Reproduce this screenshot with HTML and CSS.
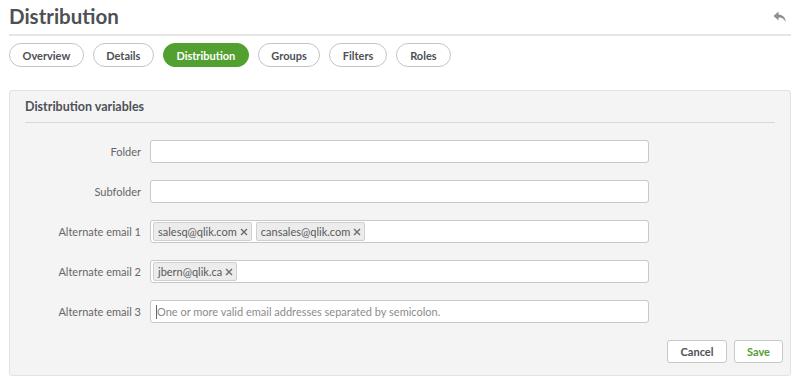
FILE: index.html
```html
<!DOCTYPE html>
<html lang="en">
<head>
    <meta charset="UTF-8">
    <meta name="viewport" content="width=device-width, initial-scale=1.0">
    <title>Distribution</title>
    <link rel="stylesheet" href="styles.css">
</head>
<body>
    <div class="page">
        <header class="page-header">
            <h1 class="title">Distribution</h1>
            <button class="undo" title="Back">
                <svg width="14" height="12" viewBox="0 0 14 12">
                    <path d="M5.5 0.5 L0.5 5 L5.5 9.5 L5.5 6.6 C8.6 6.4 10.9 7.6 12.8 11 C12.5 6.6 10.2 3.7 5.5 3.4 Z" fill="#8a9196"/>
                </svg>
            </button>
        </header>

        <nav class="tabs">
            <button class="tab">Overview</button>
            <button class="tab">Details</button>
            <button class="tab active">Distribution</button>
            <button class="tab">Groups</button>
            <button class="tab">Filters</button>
            <button class="tab">Roles</button>
        </nav>

        <section class="panel">
            <h2 class="panel-title">Distribution variables</h2>

            <div class="form">
                <div class="row">
                    <label class="label">Folder</label>
                    <div class="field"></div>
                </div>
                <div class="row">
                    <label class="label">Subfolder</label>
                    <div class="field"></div>
                </div>
                <div class="row">
                    <label class="label">Alternate email 1</label>
                    <div class="field">
                        <span class="tag">salesq@qlik.com
                            <svg class="x" width="8" height="8" viewBox="0 0 8 8"><path d="M1 1 L7 7 M7 1 L1 7" stroke="#6b6b6b" stroke-width="1.4"/></svg>
                        </span>
                        <span class="tag">cansales@qlik.com
                            <svg class="x" width="8" height="8" viewBox="0 0 8 8"><path d="M1 1 L7 7 M7 1 L1 7" stroke="#6b6b6b" stroke-width="1.4"/></svg>
                        </span>
                    </div>
                </div>
                <div class="row">
                    <label class="label">Alternate email 2</label>
                    <div class="field">
                        <span class="tag">jbern@qlik.ca
                            <svg class="x" width="8" height="8" viewBox="0 0 8 8"><path d="M1 1 L7 7 M7 1 L1 7" stroke="#6b6b6b" stroke-width="1.4"/></svg>
                        </span>
                    </div>
                </div>
                <div class="row">
                    <label class="label">Alternate email 3</label>
                    <div class="field">
                        <span class="caret"></span>
                        <span class="placeholder">One or more valid email addresses separated by semicolon.</span>
                    </div>
                </div>
            </div>

            <div class="actions">
                <button class="btn">Cancel</button>
                <button class="btn save">Save</button>
            </div>
        </section>
    </div>
</body>
</html>
```

FILE: styles.css
```css
* {
    margin: 0;
    padding: 0;
    box-sizing: border-box;
}

body {
    font-family: 'Lato', 'Noto Sans', sans-serif;
    background: #fff;
    color: #595959;
    width: 800px;
    height: 386px;
    overflow: hidden;
}

.page {
    padding: 0 9px;
}

.page-header {
    display: flex;
    justify-content: space-between;
    align-items: center;
    height: 36px;
    border-bottom: 2px solid #e6e6e6;
}

.title {
    font-size: 20.5px;
    font-weight: 700;
    color: #4d5156;
    line-height: 36px;
    margin-top: -2px;
}

.undo {
    background: none;
    border: none;
    margin-right: 4px;
    display: flex;
}

.tabs {
    display: flex;
    gap: 9px;
    margin-top: 7px;
    height: 24px;
}

.tab {
    font-family: inherit;
    font-size: 11px;
    font-weight: 700;
    color: #4d5156;
    background: #fff;
    border: 1px solid #c4c4c4;
    border-radius: 12px;
    padding: 0 12.5px;
    min-width: 55px;
    height: 24px;
}

.tab.active {
    background: #52a02f;
    border-color: #52a02f;
    color: #fff;
}

.panel {
    margin-top: 23px;
    background: #f4f4f4;
    border: 1px solid #e2e2e2;
    border-radius: 3px;
    height: 286px;
    padding: 0 15px;
}

.panel-title {
    font-size: 12.5px;
    font-weight: 700;
    color: #4d5156;
    height: 32px;
    line-height: 30px;
    padding-top: 1px;
    border-bottom: 1px solid #d9d9d9;
}

.form {
    padding-top: 17px;
}

.row {
    display: flex;
    align-items: center;
    height: 23px;
    margin-bottom: 17px;
}

.label {
    width: 116px;
    text-align: right;
    font-size: 11px;
    color: #666;
    margin-right: 9px;
}

.field {
    width: 499px;
    height: 23px;
    background: #fff;
    border: 1px solid #c8c8c8;
    border-radius: 3px;
    display: flex;
    align-items: center;
    gap: 4px;
    padding: 0 2px;
}

.tag {
    display: flex;
    align-items: center;
    gap: 3px;
    font-size: 11px;
    color: #595959;
    background: #ececec;
    border: 1px solid #d0d0d0;
    border-radius: 2px;
    height: 19px;
    padding: 0 3px 0 4px;
}

.caret {
    width: 1px;
    height: 14px;
    background: #666;
    margin-left: 3px;
}

.placeholder {
    font-size: 11px;
    color: #8c8c8c;
    margin-left: -4px;
}

.actions {
    display: flex;
    justify-content: flex-end;
    gap: 7px;
    margin-top: 4px;
    margin-right: -8px;
}

.btn {
    font-family: inherit;
    font-size: 11px;
    font-weight: 700;
    color: #4d5156;
    background: #fff;
    border: 1px solid #c8c8c8;
    border-radius: 3px;
    height: 23px;
    width: 60px;
}

.btn.save {
    color: #52a02f;
    width: 49px;
}
```
